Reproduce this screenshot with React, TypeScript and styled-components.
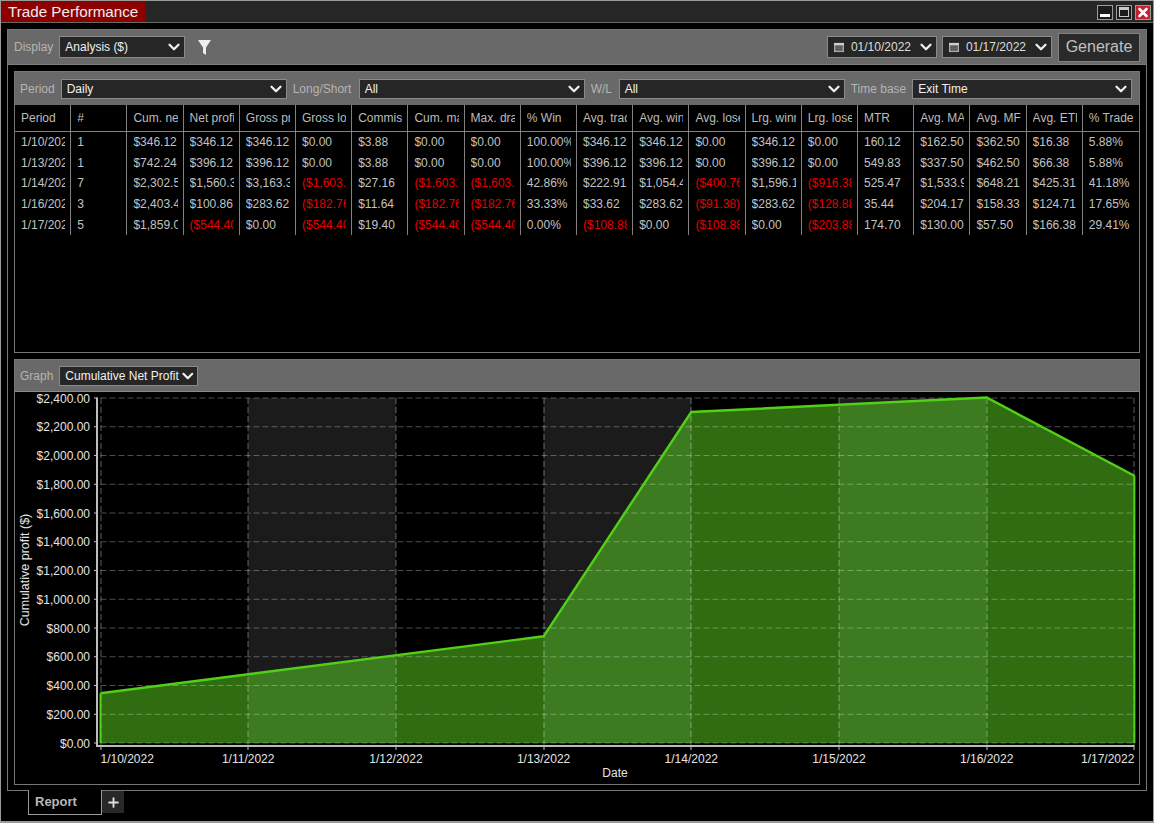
import React from "react";
import styled, { createGlobalStyle } from "styled-components";
import { ChevronDown, Plus, X } from "lucide-react";

const GlobalStyle = createGlobalStyle`
  html, body {
    margin: 0;
    padding: 0;
    background: #000;
  }
  * {
    box-sizing: border-box;
  }
`;

const Window = styled.div`
  width: 1154px;
  height: 823px;
  background: #000;
  border: 1px solid #9a9a9a;
  border-bottom-width: 2px;
  font-family: "Liberation Sans", Arial, sans-serif;
  display: flex;
  flex-direction: column;
  overflow: hidden;
  opacity: 0.999;
`;

const TitleBar = styled.div`
  height: 22px;
  flex: none;
  background: #262626;
  border-bottom: 1px solid #6a6a6a;
  display: flex;
  align-items: stretch;
  justify-content: space-between;
`;

const TitleTab = styled.div`
  background: #8c0000;
  color: #eee;
  font-size: 15.2px;
  line-height: 21px;
  padding: 0 0 0 7px;
  width: 144px;
  white-space: nowrap;
`;

const WinButtons = styled.div`
  display: flex;
  gap: 3px;
  padding: 4px 2px 0 0;
`;

const WinButton = styled.div<{ $close?: boolean }>`
  width: 16px;
  height: 15px;
  display: flex;
  align-items: center;
  justify-content: center;
  border: 1px solid #9a9a9a;
  background: ${(p) => (p.$close ? "#c1222e" : "#1c1c1c")};
  color: #fff;
`;

const Body = styled.div`
  flex: 1;
  min-height: 0;
  padding: 6px 6px 0 6px;
  display: flex;
  flex-direction: column;
`;

const Frame = styled.div`
  height: 762px;
  flex: none;
  border: 1px solid #767676;
  display: flex;
  flex-direction: column;
`;

const Bar = styled.div`
  background: #696969;
  display: flex;
  align-items: center;
  flex: none;
`;

const MainBar = styled(Bar)`
  height: 35px;
  padding: 0 6px;
  border-bottom: 1px solid #7d7d7d;
`;

const Spacer = styled.div`
  flex: 1;
`;

const Label = styled.span<{ $w?: number }>`
  color: #b4b4b4;
  font-size: 12px;
  white-space: nowrap;
  flex: none;
  ${(p) => (p.$w ? `width: ${p.$w}px;` : "")}
`;

const SelectBox = styled.div<{ $w: number; $h: number }>`
  width: ${(p) => p.$w}px;
  height: ${(p) => p.$h}px;
  flex: none;
  background: #262626;
  border: 1px solid #8a8a8a;
  color: #f0f0f0;
  font-size: 12px;
  display: flex;
  align-items: center;
  justify-content: space-between;
  padding: 0 1px 0 5px;
  white-space: nowrap;
`;

const DateBox = styled(SelectBox)`
  padding: 0 1px 0 6px;
  color: #dcdcdc;
  justify-content: flex-start;
  gap: 6px;
`;

const DateText = styled.span`
  margin-left: 1px;
`;

const DateChevron = styled.span`
  margin-left: auto;
  display: flex;
`;

const DisplayLabel = styled(Label)`
  margin: 0 6px 0 0;
`;

const FilterIcon = styled.svg`
  display: block;
  margin-left: 13px;
`;

const DateGroup = styled.div`
  display: flex;
  gap: 5px;
  align-items: center;
`;

const GenerateButton = styled.div`
  width: 82px;
  height: 29px;
  margin-left: 6px;
  background: #2a2a2a;
  border: 1px solid #808080;
  color: #c0c0c0;
  font-size: 16px;
  display: flex;
  align-items: center;
  justify-content: center;
`;

const Content = styled.div`
  flex: 1;
  min-height: 0;
  padding: 6px;
  display: flex;
  flex-direction: column;
  gap: 6px;
`;

const Panel = styled.div<{ $h: number }>`
  height: ${(p) => p.$h}px;
  flex: none;
  border: 1px solid #767676;
  display: flex;
  flex-direction: column;
`;

const FilterBar = styled(Bar)`
  height: 33px;
  padding: 0 6px 0 5px;
  gap: 6px;
`;

const GraphBar = styled(Bar)`
  height: 32px;
  padding: 0 6px 0 5px;
  gap: 6px;
  border-bottom: 1px solid #8a8a8a;
`;

const Grid = styled.div`
  display: grid;
  grid-template-columns: repeat(20, minmax(0, 1fr));
`;

const HeadRow = styled(Grid)`
  height: 27px;
  border-bottom: 1px solid #808080;
`;

const Row = styled(Grid)`
  height: 20.7px;
`;

const Cell = styled.div<{ $last?: boolean }>`
  padding: 0 5px 0 6px;
  border-right: ${(p) => (p.$last ? "none" : "1px solid #808080")};
`;

const CellText = styled.span<{ $neg?: boolean; $head?: boolean }>`
  display: block;
  overflow: hidden;
  white-space: nowrap;
  font-size: 12px;
  line-height: ${(p) => (p.$head ? "26px" : "20px")};
  color: ${(p) => (p.$neg ? "#e60000" : p.$head ? "#bcbcbc" : "#c2c2c2")};
`;

const ChartWrap = styled.div`
  flex: 1;
  min-height: 0;
`;

const TabRow = styled.div`
  display: flex;
  margin: -1px 0 0 21px;
  height: 26px;
  align-items: flex-start;
`;

const ActiveTab = styled.div`
  width: 74px;
  height: 25px;
  background: #000;
  border: 1px solid #9a9a9a;
  border-top: none;
  color: #b8b8b8;
  font-size: 13px;
  font-weight: bold;
  padding: 4px 0 0 6px;
`;

const AddTab = styled.div`
  width: 22px;
  height: 22px;
  margin-top: 1px;
  background: #282828;
  color: #ddd;
  display: flex;
  align-items: center;
  justify-content: center;
`;

const headers = [
  "Period", "#", "Cum. ne", "Net profi", "Gross pr", "Gross lo", "Commiss",
  "Cum. ma", "Max. dra", "% Win", "Avg. trad", "Avg. win", "Avg. lose",
  "Lrg. winn", "Lrg. lose", "MTR", "Avg. MA", "Avg. MF", "Avg. ETD", "% Trade",
];

const rows = [
  ["1/10/202", "1", "$346.12", "$346.12", "$346.12", "$0.00", "$3.88", "$0.00", "$0.00", "100.00%", "$346.12", "$346.12", "$0.00", "$346.12", "$0.00", "160.12", "$162.50", "$362.50", "$16.38", "5.88%"],
  ["1/13/202", "1", "$742.24", "$396.12", "$396.12", "$0.00", "$3.88", "$0.00", "$0.00", "100.00%", "$396.12", "$396.12", "$0.00", "$396.12", "$0.00", "549.83", "$337.50", "$462.50", "$66.38", "5.88%"],
  ["1/14/202", "7", "$2,302.5", "$1,560.3", "$3,163.3", "($1,603.", "$27.16", "($1,603.", "($1,603.", "42.86%", "$222.91", "$1,054.4", "($400.76", "$1,596.1", "($916.38", "525.47", "$1,533.9", "$648.21", "$425.31", "41.18%"],
  ["1/16/202", "3", "$2,403.4", "$100.86", "$283.62", "($182.76", "$11.64", "($182.76", "($182.76", "33.33%", "$33.62", "$283.62", "($91.38)", "$283.62", "($128.88", "35.44", "$204.17", "$158.33", "$124.71", "17.65%"],
  ["1/17/202", "5", "$1,859.0", "($544.40", "$0.00", "($544.40", "$19.40", "($544.40", "($544.40", "0.00%", "($108.88", "$0.00", "($108.88", "$0.00", "($203.88", "174.70", "$130.00", "$57.50", "$166.38", "29.41%"],
];

const chartW = 1124;
const chartH = 392;
const originX = 15;
const originY = 392;
const xAt = (i: number) => 100.5 - originX + i * 147.7;
const yAt = (v: number) => 743 - originY - (v / 2400) * 345;
const points: [number, number][] = [
  [0, 346.12],
  [3, 742.24],
  [4, 2302.54],
  [6, 2403.4],
  [7, 1859],
];
const bands = [1, 3, 5];
const dates = ["1/10/2022", "1/11/2022", "1/12/2022", "1/13/2022", "1/14/2022", "1/15/2022", "1/16/2022", "1/17/2022"];
const yTicks = Array.from({ length: 13 }, (_, i) => i * 200);
const money = (v: number) => "$" + v.toLocaleString("en-US", { minimumFractionDigits: 2 });
const axisFont = "Liberation Sans, Arial, sans-serif";

const Chart = () => {
  const line = points.map(([i, v]) => `${xAt(i)},${yAt(v)}`).join(" ");
  const area = `${xAt(0)},${yAt(0)} ${line} ${xAt(7)},${yAt(0)}`;
  const bottom = yAt(0);
  const top = yAt(2400);
  return (
    <svg width={chartW} height={chartH} style={{ display: "block" }}>
      <defs>
        <clipPath id="under">
          <polygon points={area} />
        </clipPath>
      </defs>
      {bands.map((i) => (
        <rect key={i} x={xAt(i)} y={top} width={147.7} height={bottom - top} fill="#1b1b1b" />
      ))}
      <polygon points={area} fill="#2f6d10" />
      <g clipPath="url(#under)">
        {bands.map((i) => (
          <rect key={i} x={xAt(i)} y={top} width={147.7} height={bottom - top} fill="#3c7b20" />
        ))}
      </g>
      {yTicks.map((v) => (
        <line key={v} x1={xAt(0)} x2={xAt(7)} y1={yAt(v)} y2={yAt(v)} stroke="#fff" strokeOpacity={0.3} strokeWidth={1.2} strokeDasharray="6 3" />
      ))}
      {dates.map((d, i) => (
        <line key={d} x1={Math.round(xAt(i))} x2={Math.round(xAt(i))} y1={top} y2={bottom + 3} stroke="#fff" strokeOpacity={0.3} strokeWidth={1.2} strokeDasharray="6 3" />
      ))}
      <polyline points={line} fill="none" stroke="#52d017" strokeWidth={2.4} />
      <line x1={xAt(0)} x2={xAt(0)} y1={yAt(346.12)} y2={bottom} stroke="#52d017" strokeWidth={2} />
      <line x1={xAt(7)} x2={xAt(7)} y1={yAt(1859)} y2={bottom} stroke="#52d017" strokeWidth={2} />
      <rect x={81} y={top - 0.5} width={2} height={bottom - top + 4.5} fill="#bdbdbd" />
      <rect x={81} y={bottom + 2} width={xAt(7) - 81} height={2} fill="#bdbdbd" />
      {yTicks.map((v) => (
        <g key={v}>
          <line x1={79} x2={82} y1={yAt(v)} y2={yAt(v)} stroke="#bdbdbd" />
          <text x={75} y={yAt(v) + 4.5} textAnchor="end" fontSize={12} fill="#e4e4e4" fontFamily={axisFont}>
            {money(v)}
          </text>
        </g>
      ))}
      {dates.map((d, i) => (
        <g key={d}>
          <line x1={Math.round(xAt(i))} x2={Math.round(xAt(i))} y1={bottom + 3} y2={bottom + 7} stroke="#bdbdbd" />
          <text
            x={xAt(i)}
            y={bottom + 20}
            textAnchor={i === 0 ? "start" : i === 7 ? "end" : "middle"}
            fontSize={12}
            fill="#e4e4e4"
            fontFamily={axisFont}
          >
            {d}
          </text>
        </g>
      ))}
      <text x={600} y={385} textAnchor="middle" fontSize={12} fill="#e4e4e4" fontFamily={axisFont}>
        Date
      </text>
      <text
        transform={`translate(14, 178) rotate(-90)`}
        textAnchor="middle"
        fontSize={12.5}
        fill="#e4e4e4"
        fontFamily={axisFont}
      >
        Cumulative profit ($)
      </text>
    </svg>
  );
};

const CalendarIcon = () => (
  <svg width="12" height="11" viewBox="0 0 12 11">
    <rect x="0.5" y="0.5" width="11" height="10" fill="#8a8a8a" stroke="#c0c0c0" />
    <rect x="0" y="0" width="12" height="2.5" fill="#d0d0d0" />
    <path d="M3.5 3v7M6 3v7M8.5 3v7M1 5h10M1 7.5h10" stroke="#3a3a3a" strokeWidth="0.8" />
  </svg>
);

const MinimizeIcon = () => (
  <svg width="14" height="13" viewBox="0 0 14 13">
    <rect x="2" y="8" width="10" height="3" fill="#fff" />
  </svg>
);

const MaximizeIcon = () => (
  <svg width="14" height="13" viewBox="0 0 14 13">
    <rect x="2.5" y="1.5" width="9" height="9" fill="none" stroke="#c8c8c8" />
    <rect x="2" y="1" width="10" height="3" fill="#c8c8c8" />
  </svg>
);

const Funnel = () => (
  <FilterIcon width="13" height="15" viewBox="0 0 13 15">
    <path d="M0 0h13L8 7.5V15L5 13V7.5z" fill="#eee" />
  </FilterIcon>
);

const Chevron = () => <ChevronDown size={18} strokeWidth={3} color="#f0f0f0" />;

const Select = ({ w, h, children }: { w: number; h: number; children: React.ReactNode }) => (
  <SelectBox $w={w} $h={h}>
    <span>{children}</span>
    <Chevron />
  </SelectBox>
);

const DateSelect = ({ children }: { children: React.ReactNode }) => (
  <DateBox $w={110} $h={22}>
    <CalendarIcon />
    <DateText>{children}</DateText>
    <DateChevron>
      <Chevron />
    </DateChevron>
  </DateBox>
);

const App = () => (
  <>
    <GlobalStyle />
    <Window>
      <TitleBar>
        <TitleTab>Trade Performance</TitleTab>
        <WinButtons>
          <WinButton>
            <MinimizeIcon />
          </WinButton>
          <WinButton>
            <MaximizeIcon />
          </WinButton>
          <WinButton $close>
            <X size={15} strokeWidth={4.5} />
          </WinButton>
        </WinButtons>
      </TitleBar>
      <Body>
        <Frame>
          <MainBar>
            <DisplayLabel>Display</DisplayLabel>
            <Select w={126} h={22}>Analysis ($)</Select>
            <Funnel />
            <Spacer />
            <DateGroup>
              <DateSelect>01/10/2022</DateSelect>
              <DateSelect>01/17/2022</DateSelect>
            </DateGroup>
            <GenerateButton>Generate</GenerateButton>
          </MainBar>
          <Content>
            <Panel $h={282}>
              <FilterBar>
                <Label>Period</Label>
                <Select w={226} h={20}>Daily</Select>
                <Label $w={60}>Long/Short</Label>
                <Select w={226} h={20}>All</Select>
                <Label $w={22}>W/L</Label>
                <Select w={226} h={20}>All</Select>
                <Label>Time base</Label>
                <Select w={220} h={20}>Exit Time</Select>
              </FilterBar>
              <HeadRow>
                {headers.map((h, i) => (
                  <Cell key={h} $last={i === headers.length - 1}>
                    <CellText $head>{h}</CellText>
                  </Cell>
                ))}
              </HeadRow>
              <div>
                {rows.map((r) => (
                  <Row key={r[0]}>
                    {r.map((c, i) => (
                      <Cell key={i} $last={i === r.length - 1}>
                        <CellText $neg={c.startsWith("(")}>{c}</CellText>
                      </Cell>
                    ))}
                  </Row>
                ))}
              </div>
            </Panel>
            <Panel $h={426}>
              <GraphBar>
                <Label>Graph</Label>
                <Select w={139} h={20}>Cumulative Net Profit</Select>
              </GraphBar>
              <ChartWrap>
                <Chart />
              </ChartWrap>
            </Panel>
          </Content>
        </Frame>
        <TabRow>
          <ActiveTab>Report</ActiveTab>
          <AddTab>
            <Plus size={15} strokeWidth={3} />
          </AddTab>
        </TabRow>
      </Body>
    </Window>
  </>
);

export default App;
